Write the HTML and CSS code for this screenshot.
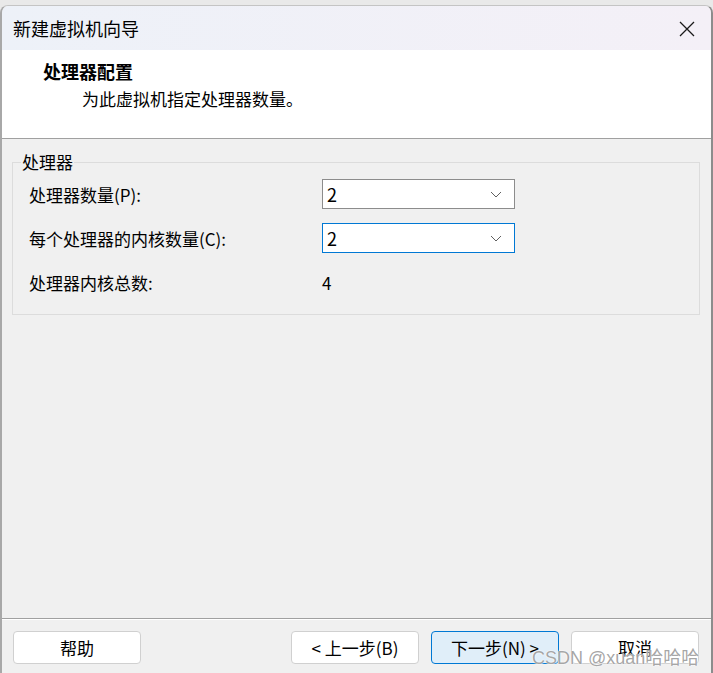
FILE: index.html
```html
<!DOCTYPE html>
<html lang="zh-CN">
<head>
    <title>新建虚拟机向导</title>
    <meta charset="UTF-8">
    <link rel="stylesheet" href="styles.css">
</head>
<body>
    <div class="window">
        <div class="titlebar">
            <span class="title">新建虚拟机向导</span>
            <svg class="close" width="16" height="16" viewBox="0 0 16 16">
                <path d="M1 1 L15 15 M15 1 L1 15" stroke="#1a1a1a" stroke-width="1.3" fill="none"/>
            </svg>
        </div>

        <!-- 页头 -->
        <div class="header">
            <div class="header-title">处理器配置</div>
            <div class="header-sub">为此虚拟机指定处理器数量。</div>
        </div>

        <!-- 处理器 -->
        <div class="content">
            <fieldset class="group">
                <legend>处理器</legend>
                <div class="grid">
                    <label>处理器数量(P):</label>
                    <div class="select">
                        <span>2</span>
                        <svg width="12" height="7" viewBox="0 0 12 7"><path d="M1 1 L6 6 L11 1" stroke="#606060" stroke-width="1" fill="none"/></svg>
                    </div>
                    <label>每个处理器的内核数量(C):</label>
                    <div class="select focused">
                        <span>2</span>
                        <svg width="12" height="7" viewBox="0 0 12 7"><path d="M1 1 L6 6 L11 1" stroke="#606060" stroke-width="1" fill="none"/></svg>
                    </div>
                    <label>处理器内核总数:</label>
                    <div class="value">4</div>
                </div>
            </fieldset>
        </div>

        <!-- 按钮 -->
        <div class="footer">
            <button class="btn">帮助</button>
            <div class="spacer"></div>
            <button class="btn">&lt; 上一步(B)</button>
            <button class="btn primary">下一步(N) &gt;</button>
            <button class="btn">取消</button>
        </div>

        <div class="watermark">CSDN @xuan哈哈哈</div>
    </div>
</body>
</html>
```

FILE: styles.css
```css
body { margin: 0; background: #e9e9e9; font-family: "Noto Sans CJK SC", "Liberation Sans", sans-serif; color: #000; overflow: hidden; }
.window { position: relative; margin-top: 5px; height: 667px; background: #f0f0f0; border-top: 1px solid #c4c4c4; border-left: 2px solid #a8a8a8; border-right: 2px solid #8c8c8c; border-radius: 8px 8px 0 0; display: flex; flex-direction: column; overflow: hidden; }
.titlebar { height: 44px; display: flex; align-items: center; justify-content: space-between; padding: 0 16px 0 11px; background: linear-gradient(to right, #edf1f8, #f4f0f7); flex-shrink: 0; }
.title { font-size: 18px; }
.close { display: block; margin-top: 1px; }
.header { height: 89px; background: #fff; border-bottom: 1px solid #a0a0a0; padding: 9px 0 0 41px; box-sizing: border-box; flex-shrink: 0; }
.header-title { font-size: 18px; line-height: 24px; font-weight: bold; }
.header-sub { font-size: 17px; line-height: 24px; margin-top: 4px; padding-left: 39px; }
.content { height: 479px; padding: 13px 11px 0 10px; box-sizing: border-box; flex-shrink: 0; }
.group { margin: 0; border: 1px solid #dcdcdc; padding: 7px 16px 17px 16px; }
.group legend { font-size: 17px; line-height: 20px; padding: 0 1px; margin-left: -8px; }
.grid { display: grid; grid-template-columns: 293px 193px; grid-auto-rows: 30px; row-gap: 14px; align-items: center; font-size: 17px; }
.select { height: 30px; box-sizing: border-box; background: #fff; border: 1px solid #8c8c8c; display: flex; align-items: center; justify-content: space-between; padding: 0 12px 0 4px; font-size: 18px; }
.select.focused { border-color: #0078d4; }
.select svg { display: block; }
.value { font-size: 17px; }
.footer { border-top: 1px solid #a0a0a0; box-shadow: inset 0 1px 0 #fff; display: flex; padding: 12px 12px 0 11px; gap: 12px; flex: 1; align-items: flex-start; }
.spacer { flex: 1; }
.btn { width: 128px; height: 33px; background: #fff; border: 1px solid #d0d0d0; border-radius: 4px; font-family: "Noto Sans CJK SC", "Liberation Sans", sans-serif; font-size: 17px; color: #000; padding: 0; }
.btn.primary { background: #e0eef9; border-color: #0078d4; }
.watermark { position: absolute; left: 530px; top: 637px; font-family: "Liberation Sans", "Noto Sans CJK SC", sans-serif; font-size: 18px; color: rgba(150, 150, 150, 0.85); text-shadow: 0 0 2px #fff, 0 0 1px #fff; white-space: nowrap; }
```
